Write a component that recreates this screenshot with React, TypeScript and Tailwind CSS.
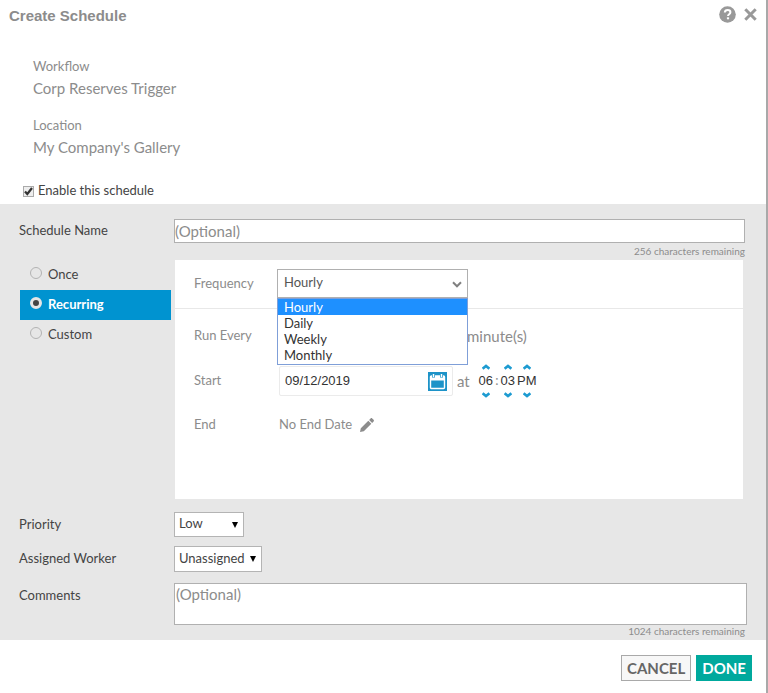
import React, { useState } from 'react';

const frequencies = ['Hourly', 'Daily', 'Weekly', 'Monthly'];
const modes = ['Once', 'Recurring', 'Custom'];

const Chevron: React.FC<{ up?: boolean }> = ({ up }) => (
  <svg width="8" height="6" viewBox="0 0 8 6" fill="none" className={up ? 'rotate-180' : ''}>
    <path d="M.6 1.200 4 4 7.400 1.200" stroke="#1d9bd1" strokeWidth="2.600" />
  </svg>
);

const TimePart: React.FC<{ label: string; value: string; className: string }> = ({
  label,
  value,
  className,
}) => (
  <div className={`flex flex-col items-center ${className}`}>
    <button type="button" aria-label={`${label} up`}>
      <Chevron up />
    </button>
    <input
      aria-label={label}
      defaultValue={value}
      className="my-[3px] h-4 w-full text-center font-['Liberation_Sans',sans-serif] text-[13px] leading-4 text-[#333] outline-none"
    />
    <button type="button" aria-label={`${label} down`}>
      <Chevron />
    </button>
  </div>
);

const SmallSelect: React.FC<{ id: string; value: string; className: string }> = ({
  id,
  value,
  className,
}) => (
  <div className={`relative ${className}`}>
    <select
      id={id}
      className="h-full w-full appearance-none border border-[#b4b4b4] bg-white pb-px pl-1 text-[13px] text-[#444]"
    >
      <option>{value}</option>
    </select>
    <svg
      width="6"
      height="7"
      viewBox="0 0 6 7"
      className="pointer-events-none absolute top-1/2 right-1.5 -translate-y-1/2"
    >
      <path d="M0 .5h6L3 6.5z" fill="#000" />
    </svg>
  </div>
);

const App: React.FC = () => {
  const [mode, setMode] = useState('Recurring');
  const [frequency, setFrequency] = useState('Hourly');

  return (
    <div className="min-h-screen border-r-2 border-[#a9a9a9] bg-white font-['Lato',sans-serif] text-[13px] text-[#444]">
      {/* Header */}
      <header className="flex h-7 items-center justify-between pt-[5px] pr-[9px] pl-[9px]">
        <h1 className="font-['Liberation_Sans',sans-serif] text-[15px] font-bold text-[#8c8c8c]">
          Create Schedule
        </h1>
        <div className="flex items-center gap-2 pb-1">
          <button type="button" aria-label="Help">
            <svg width="17" height="17" viewBox="0 0 17 17" fill="none">
              <circle cx="8.5" cy="8.5" r="8.3" fill="#999" />
              <path
                d="M5.8 6.5C5.9 4.8 7 4 8.6 4c1.600 0 2.800.9 2.800 2.300 0 1.900-2.400 1.900-2.400 3.700"
                stroke="#fff"
                strokeWidth="2"
              />
              <path d="M7.900 11.300h2.200v2H7.900z" fill="#fff" />
            </svg>
          </button>
          <button type="button" aria-label="Close">
            <svg width="13" height="13" viewBox="0 0 13 13" fill="none">
              <path d="m1.300 1.300 10.400 10.400m0-10.400L1.300 11.700" stroke="#999" strokeWidth="3" />
            </svg>
          </button>
        </div>
      </header>

      <dl className="mt-7 pl-[33px] text-[#8c8c8c]">
        <dt className="leading-5">Workflow</dt>
        <dd className="text-[15px] leading-6">Corp Reserves Trigger</dd>
        <dt className="mt-[15px] leading-5">Location</dt>
        <dd className="text-[15px] leading-6">My Company's Gallery</dd>
      </dl>

      <label className="mt-5 flex h-6 items-center gap-1 pl-[23px]">
        <span className="relative flex">
          <input
            type="checkbox"
            defaultChecked
            className="peer size-[11px] appearance-none border border-[#aaa] bg-[#eee]"
          />
          <svg
            width="11"
            height="11"
            viewBox="0 0 11 11"
            fill="none"
            className="pointer-events-none absolute hidden peer-checked:block"
          >
            <path d="m2 5.500 2.300 2.500 4.700-6" stroke="#333" strokeWidth="2.200" />
          </svg>
        </span>
        Enable this schedule
      </label>

      {/* Form */}
      <main className="mt-px bg-[#e7e7e7] pt-[15px] pb-[2px] pl-[19px]">
        <div className="flex items-center pr-[21px]">
          <label htmlFor="name" className="w-[155px]">
            Schedule Name
          </label>
          <input
            id="name"
            placeholder="(Optional)"
            className="h-6 min-w-0 flex-1 border border-[#b0b0b0] bg-white pb-px text-[15px] placeholder:text-[#8c8c8c]"
          />
        </div>
        <p className="pr-[21px] text-right text-[10px] leading-[17px] text-[#8c8c8c]">
          256 characters remaining
        </p>

        <div className="flex pr-[23px]">
          <fieldset className="w-[152px] pl-px">
            {modes.map((item) => (
              <label
                key={item}
                className={`flex h-[30px] items-center gap-1.5 pl-2.5 ${
                  mode === item ? 'bg-[#0093d0] font-bold text-white' : ''
                }`}
              >
                <input
                  type="radio"
                  name="mode"
                  checked={mode === item}
                  onChange={() => setMode(item)}
                  className="mb-1 size-3 appearance-none rounded-full border border-[#b3b3b3] bg-[#e6e6e6] checked:border-3 checked:border-[#e6e6e6] checked:bg-[#444]"
                />
                {item}
              </label>
            ))}
          </fieldset>

          <section className="ml-1 h-[239px] flex-1 bg-white text-[#8c8c8c]">
            <div className="flex h-[49px] border-b border-[#e8e8e8] pt-[9px] pl-[19px]">
              <label htmlFor="frequency" className="w-[83px] leading-7">
                Frequency
              </label>
              <div className="relative h-[29px] w-[191px]">
                <select
                  id="frequency"
                  value={frequency}
                  onChange={(e) => setFrequency(e.target.value)}
                  className="h-full w-full appearance-none border border-[#b0b0b0] bg-white pb-px pl-1.5 text-[#555]"
                >
                  {frequencies.map((item) => (
                    <option key={item}>{item}</option>
                  ))}
                </select>
                <svg
                  width="10"
                  height="7"
                  viewBox="0 0 10 7"
                  fill="none"
                  className="pointer-events-none absolute top-3 right-1.5"
                >
                  <path d="m1 1.300 4 4 4-4" stroke="#808080" strokeWidth="2" />
                </svg>
                <ul
                  role="listbox"
                  className="absolute top-full left-0 z-10 w-full border border-[#7f9fd8] bg-white pb-px leading-4 text-[#333]"
                >
                  {frequencies.map((item) => (
                    <li
                      key={item}
                      role="option"
                      aria-selected={item === frequency}
                      onClick={() => setFrequency(item)}
                      className={`pl-1.5 ${item === frequency ? 'bg-[#1e90ff] text-white' : ''}`}
                    >
                      {item}
                    </li>
                  ))}
                </ul>
              </div>
            </div>

            <div className="flex h-[54px] items-center pl-[19px]">
              <label htmlFor="every" className="w-[85px]">
                Run Every
              </label>
              <input
                id="every"
                className="mr-2 h-[30px] w-[180px] rounded-xs border border-[#ebebeb]"
              />
              <span className="text-[15px]">minute(s)</span>
            </div>

            <div className="flex h-9 items-center pl-[19px]">
              <label htmlFor="start" className="w-[85px]">
                Start
              </label>
              <div className="flex h-[30px] w-[174px] items-center rounded-xs border border-[#ebebeb] px-[5px]">
                <input
                  id="start"
                  defaultValue="09/12/2019"
                  className="min-w-0 flex-1 font-['Liberation_Sans',sans-serif] text-[13px] text-[#333] outline-none"
                />
                <button type="button" aria-label="Pick a date">
                  <svg width="19" height="19" viewBox="0 0 19 19" fill="none">
                    <path d="M0 0h19v19H0z" fill="#1d93c8" />
                    <rect x="2.500" y="4" width="14" height="12.500" rx="1" stroke="#fff" strokeWidth="1.400" />
                    <path d="M2.500 4h14v4.500h-14z" fill="#fff" />
                    <path d="M5.500 2v3.500M13.500 2v3.500" stroke="#1d93c8" strokeWidth="3" />
                    <path d="M5.500 2v3M13.500 2v3" stroke="#fff" strokeWidth="1.500" />
                  </svg>
                </button>
              </div>
              <span className="ml-1 text-[15px]">at</span>
              <div className="ml-[7px] flex items-center">
                <TimePart label="Hour" value="06" className="w-[18px]" />
                <span className="w-1 text-center">:</span>
                <TimePart label="Minute" value="03" className="w-[18px]" />
                <TimePart label="AM or PM" value="PM" className="w-5" />
              </div>
            </div>

            <div className="flex h-[52px] items-center pl-[19px]">
              <span className="w-[85px]">End</span>
              <span>No End Date</span>
              <button type="button" aria-label="Edit end date" className="ml-2">
                <svg width="14" height="14" viewBox="0 0 14 14" fill="#8c8c8c">
                  <path d="M0 14 .8 10.200 8.300 2.700l3 3L3.800 13.200zM9.100 1.900 10.600.4c.5-.5 1.100-.5 1.600 0l1.400 1.400c.5.5.5 1.100 0 1.600l-1.500 1.500z" />
                </svg>
              </button>
            </div>
          </section>
        </div>

        <div className="mt-[13px] flex items-center">
          <label htmlFor="priority" className="w-[155px]">
            Priority
          </label>
          <SmallSelect id="priority" value="Low" className="h-[25px] w-[70px]" />
        </div>
        <div className="mt-[9px] flex items-center">
          <label htmlFor="worker" className="w-[155px]">
            Assigned Worker
          </label>
          <SmallSelect id="worker" value="Unassigned" className="h-[26px] w-[88px]" />
        </div>
        <div className="mt-[11px] flex pr-[19px]">
          <label htmlFor="comments" className="w-[155px] leading-6">
            Comments
          </label>
          <textarea
            id="comments"
            placeholder="(Optional)"
            className="h-[42px] min-w-0 flex-1 resize-none border border-[#b0b0b0] bg-white px-px text-[15px] leading-5 placeholder:text-[#8c8c8c]"
          />
        </div>
        <p className="pr-[21px] text-right text-[10px] leading-[13px] text-[#8c8c8c]">
          1024 characters remaining
        </p>
      </main>

      {/* Actions */}
      <footer className="flex justify-end gap-[5px] pt-[15px] pr-[14px] text-[15px] leading-6 font-bold">
        <button type="button" className="h-[26px] border border-[#a9a9a9] bg-[#f7f7f7] px-[5px] text-[#666]">
          CANCEL
        </button>
        <button type="button" className="h-[26px] bg-[#00a99d] px-1.5 text-white">
          DONE
        </button>
      </footer>
    </div>
  );
};

export default App;
